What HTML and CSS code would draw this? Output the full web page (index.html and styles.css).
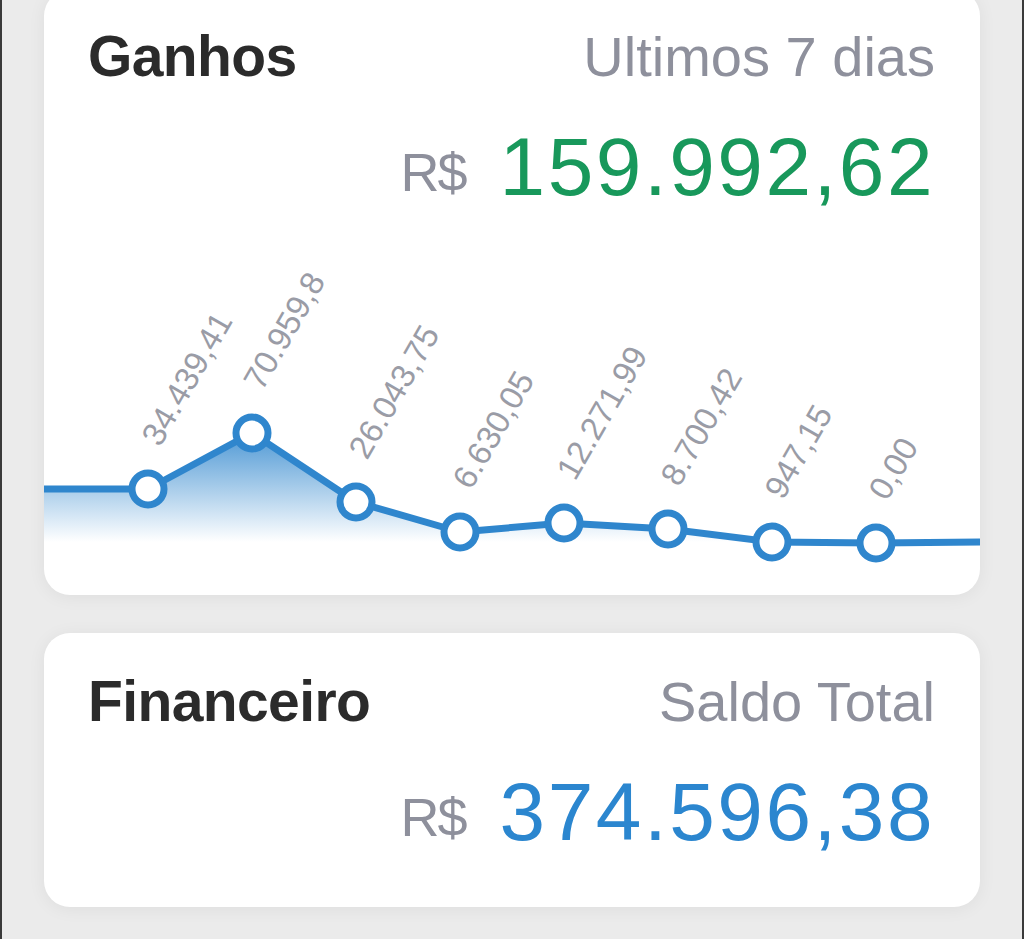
FILE: index.html
```html
<!DOCTYPE html>
<html lang="pt-BR">
<head>
  <meta charset="UTF-8" />
  <meta name="viewport" content="width=device-width, initial-scale=1.0"/>
  <title>Resumo</title>
  <link rel="stylesheet" href="styles.css">
</head>
<body>
  <div class="tela">
    <section class="card ganhos">
      <div class="cabecalho">
        <h2 class="titulo">Ganhos</h2>
        <span class="subtitulo">Ultimos 7 dias</span>
      </div>
      <div class="valor"><span class="moeda">R$</span><span class="numero verde">159.992,62</span></div>

      <svg class="grafico" viewBox="0 0 936 383" width="936" height="383">
        <defs>
          <linearGradient id="preenchimento" gradientUnits="userSpaceOnUse" x1="0" y1="221" x2="0" y2="330">
            <stop offset="0" stop-color="#2f86cd" stop-opacity="0.85"/>
            <stop offset="1" stop-color="#2f86cd" stop-opacity="0"/>
          </linearGradient>
        </defs>
        <polygon class="area" points="0,277 104,277 208,221 312,290 416,320 520,311 624,317 728,330 832,331 936,330 936,383 0,383"/>
        <polyline class="linha" points="0,277 104,277 208,221 312,290 416,320 520,311 624,317 728,330 832,331 936,330"/>

        <circle class="ponto" cx="104" cy="277" r="16"/>
        <circle class="ponto" cx="208" cy="221" r="16"/>
        <circle class="ponto" cx="312" cy="290" r="16"/>
        <circle class="ponto" cx="416" cy="320" r="16"/>
        <circle class="ponto" cx="520" cy="311" r="16"/>
        <circle class="ponto" cx="624" cy="317" r="16"/>
        <circle class="ponto" cx="728" cy="330" r="16"/>
        <circle class="ponto" cx="832" cy="331" r="16"/>

        <!-- rotulos em -60 graus, ancorados logo acima de cada ponto -->
        <text class="rotulo" transform="translate(116 236) rotate(-60)">34.439,41</text>
        <text class="rotulo" transform="translate(218 180) rotate(-60)">70.959,8</text>
        <text class="rotulo" transform="translate(323 249) rotate(-60)">26.043,75</text>
        <text class="rotulo" transform="translate(427 279) rotate(-60)">6.630,05</text>
        <text class="rotulo" transform="translate(531 270) rotate(-60)">12.271,99</text>
        <text class="rotulo" transform="translate(635 276) rotate(-60)">8.700,42</text>
        <text class="rotulo" transform="translate(739 289) rotate(-60)">947,15</text>
        <text class="rotulo" transform="translate(843 290) rotate(-60)">0,00</text>
      </svg>
    </section>

    <section class="card financeiro">
      <div class="cabecalho">
        <h2 class="titulo">Financeiro</h2>
        <span class="subtitulo">Saldo Total</span>
      </div>
      <div class="valor"><span class="moeda">R$</span><span class="numero azul">374.596,38</span></div>
    </section>
  </div>
</body>
</html>
```

FILE: styles.css
```css
html, body { margin: 0; padding: 0; }
body {
  background: #ebebeb;
  font-family: "Liberation Sans", Arial, sans-serif;
  border-left: 2px solid #3a3a3a;
  border-right: 2px solid #3a3a3a;
  height: 939px;
  overflow: hidden;
  box-sizing: border-box;
}
.tela { padding: 0 42px 0 42px; }

.card {
  background: #fff;
  border-radius: 26px;
  box-shadow: 0 2px 18px rgba(0, 0, 0, 0.06);
  overflow: hidden;
}
.ganhos { margin-top: -10px; height: 605px; padding-top: 34px; box-sizing: border-box; }
.financeiro { margin-top: 38px; height: 274px; padding-top: 36px; box-sizing: border-box; }

.cabecalho {
  display: flex;
  justify-content: space-between;
  align-items: baseline;
  padding: 0 45px 0 44px;
  height: 64px;
  line-height: 64px;
}
.titulo { margin: 0; font-size: 57px; font-weight: bold; color: #2b2b2b; letter-spacing: -0.6px; }
.subtitulo { font-size: 56px; color: #8e909c; }

.valor {
  margin-top: 34px;
  padding: 0 45px;
  text-align: right;
  height: 90px;
  line-height: 90px;
  white-space: nowrap;
}
.moeda { font-size: 54px; color: #8e909c; letter-spacing: -2px; margin-right: 34px; vertical-align: 4px; }
.numero { font-size: 82px; letter-spacing: 2.5px; }
.verde { color: #18985b; }
.azul { color: #2b86cf; }

.grafico { display: block; }
.area { fill: url(#preenchimento); }
.linha { fill: none; stroke: #2f86cd; stroke-width: 7; stroke-linejoin: round; }
.ponto { fill: #fff; stroke: #2f86cd; stroke-width: 7; }
.rotulo { font-family: "Liberation Sans", Arial, sans-serif; font-size: 33px; fill: #9a9ca6; }
```
